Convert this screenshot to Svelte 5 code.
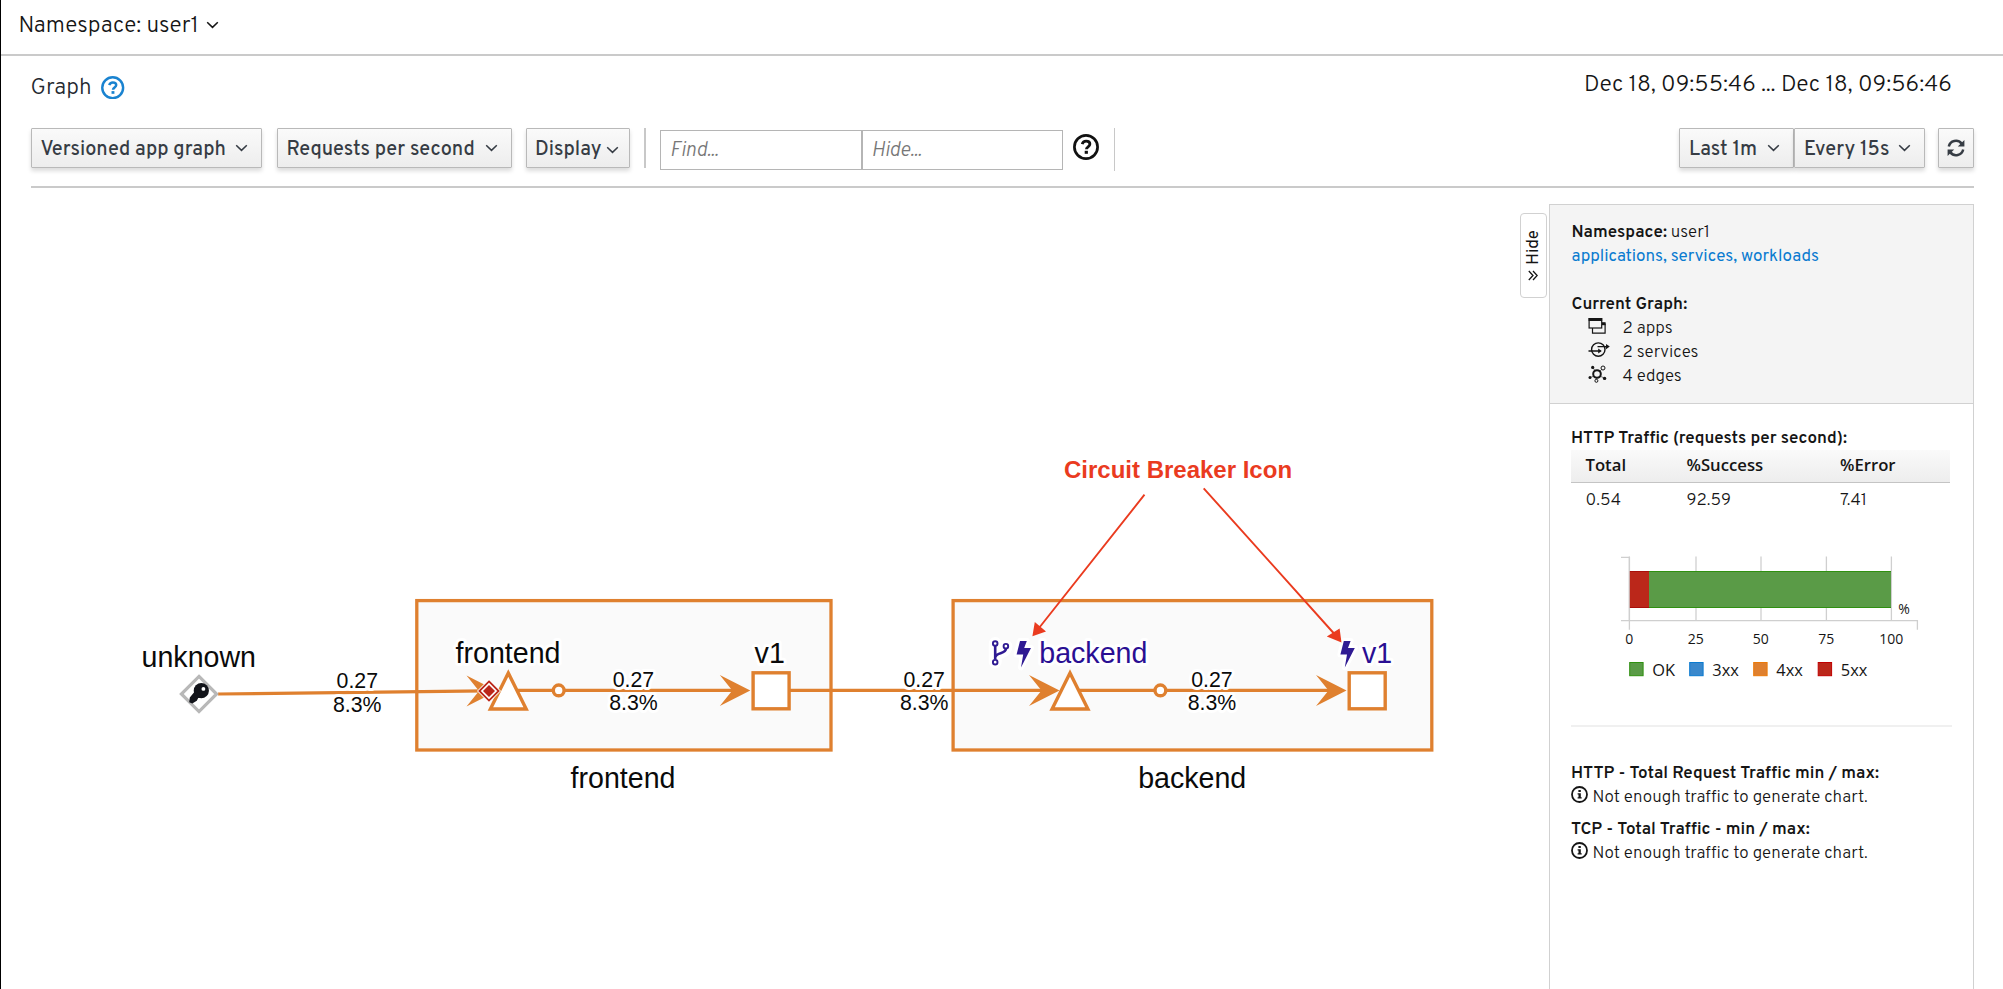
<script>
  const trafficColumns = [
    { label: 'Total', value: '0.54' },
    { label: '%Success', value: '92.59' },
    { label: '%Error', value: '7.41' }
  ];

  const ticks = [
    { x: 58, label: '0' },
    { x: 124.6, label: '25' },
    { x: 189.6, label: '50' },
    { x: 255, label: '75' },
    { x: 320, label: '100' }
  ];

  const legend = [
    { x: 58, label: 'OK', fill: '#5a9b47', edge: '#2f9010' },
    { x: 118, label: '3xx', fill: '#3a88cc', edge: '#0a7bd0' },
    { x: 182, label: '4xx', fill: '#df802f', edge: '#ec7a08' },
    { x: 246.5, label: '5xx', fill: '#bb271a', edge: '#c00000' }
  ];

  const edgeLabels = [
    { x: 357.3, y: 688.3, rate: '0.27', err: '8.3%' },
    { x: 633.4, y: 686.7, rate: '0.27', err: '8.3%' },
    { x: 924.2, y: 686.7, rate: '0.27', err: '8.3%' },
    { x: 1212, y: 686.7, rate: '0.27', err: '8.3%' }
  ];

  const arrows = [
    { x: 497, y: 691 },
    { x: 750.3, y: 690.4 },
    { x: 1059.5, y: 690.4 },
    { x: 1346.5, y: 690.4 }
  ];

  const emptyCharts = ['HTTP - Total Request Traffic min / max:', 'TCP - Total Traffic - min / max:'];
</script>

{#snippet chevron(cls)}
  <svg class="chev {cls}" width="13" height="8" viewBox="0 0 13 8"><path d="M1.2 1.2 6.5 6.4 11.8 1.2" /></svg>
{/snippet}

{#snippet help(size)}
  <svg width={size} height={size} viewBox="0 0 26 26">
    <circle cx="13" cy="13" r="11.6" fill="none" stroke="currentColor" stroke-width="2.7" />
    <path d="M9.2 10.1c.6-2.1 2-3 3.9-3 2.2 0 3.8 1.2 3.8 3 0 2.6-3.5 2.7-3.5 5.1" fill="none" stroke="currentColor" stroke-width="2.8" />
    <rect x="11.7" y="16.8" width="3.2" height="3" fill="currentColor" />
  </svg>
{/snippet}

<div class="page">
  <header class="namespace">
    <span>Namespace: user1</span>
    {@render chevron('wide')}
  </header>

  <main>
    <div class="title">
      <h1>Graph</h1>
      <span class="blue">{@render help(23.4)}</span>
      <time>Dec 18, 09:55:46 ... Dec 18, 09:56:46</time>
    </div>

    <div class="toolbar">
      <button class="type">Versioned app graph {@render chevron('')}</button>
      <button class="rate">Requests per second {@render chevron('')}</button>
      <button class="display">Display {@render chevron('low')}</button>
      <i class="divider"></i>
      <div class="inputs">
        <div class="input">Find...</div>
        <div class="input">Hide...</div>
      </div>
      <span class="find-help">{@render help(26)}</span>
      <i class="divider tall"></i>
      <button class="last">Last 1m {@render chevron('')}</button>
      <button class="every">Every 15s {@render chevron('')}</button>
      <button class="refresh" aria-label="Refresh">
        <svg width="18" height="18" viewBox="0 0 18 18">
          <g fill="none" stroke="currentColor" stroke-width="2.5">
            <path d="M1.8 7.6A7.3 7.3 0 0 1 14.6 4.6" />
            <path d="M16.2 10.4A7.3 7.3 0 0 1 3.4 13.4" />
          </g>
          <path d="M17.4 1v6.6h-6.6z M.6 17v-6.6h6.6z" fill="currentColor" />
        </svg>
      </button>
    </div>

    <div class="content">
      <svg class="graph" width="1519" height="801" viewBox="1 188 1519 801">
        <defs>
          <path id="bolt" d="M3.4 0H10.2L7.6 6.9H14.4L4.4 26.4L6.6 13.5H0Z" />
          <path id="vee" d="M0 0L-30.5 -15.5L-18 0L-30.5 15.5Z" />
        </defs>

        <g class="box">
          <rect x="416.8" y="600.6" width="414.2" height="149.4" />
          <rect x="953.1" y="600.6" width="478.7" height="149.4" />
        </g>

        <g class="edge">
          <path d="M218 694L485 690.8" />
          <path d="M518 690.4H735M790 690.4H1045M1078 690.4H1330" />
        </g>
        {#each arrows as a}
          <use href="#vee" x={a.x} y={a.y} fill="#df802f" />
        {/each}

        <g class="node">
          <path d="M508.3 673L526.2 709H490.4Z" />
          <path d="M1070 673L1087.9 709H1052.1Z" />
          <rect x="753.1" y="672.8" width="36" height="36" />
          <rect x="1349.2" y="672.8" width="36" height="36" />
          <circle cx="558.7" cy="690.4" r="5.4" />
          <circle cx="1160.4" cy="690.4" r="5.4" />
          <path class="gray" d="M199 676.4L216.6 694L199 711.6L181.4 694Z" />
        </g>

        <path d="M489 679L501 691L489 703L477 691Z" fill="#fff" />
        <path d="M489 681.4L498.6 691L489 700.6L479.4 691Z" fill="#fff" stroke="#bb271a" stroke-width="1.8" />
        <path d="M489 685L495 691L489 697L483 691Z" fill="#bb271a" />

        <g fill="#12141a">
          <circle cx="201.3" cy="690.7" r="7.6" />
          <path d="M196 690L189.8 697.6L189.2 702.3L192.3 703.6L196.8 700.8L198.2 698L203 697Z" />
          <circle cx="203.4" cy="688.9" r="1.9" fill="#fff" />
        </g>

        <g class="rates">
          {#each edgeLabels as e}
            <text x={e.x} y={e.y}>{e.rate}</text>
            <text x={e.x} y={e.y + 23.2}>{e.err}</text>
          {/each}
        </g>

        <g class="labels">
          <text x="198.8" y="667">unknown</text>
          <text x="508" y="663">frontend</text>
          <text x="769.7" y="663">v1</text>
          <text x="623" y="787.7">frontend</text>
          <text x="1192.2" y="787.7">backend</text>
          <g class="violet">
            <text x="1093.3" y="663">backend</text>
            <text x="1377" y="663">v1</text>
            <use class="halo" href="#bolt" x="1016.6" y="641" />
            <use class="halo" href="#bolt" x="1340.4" y="641" />
            <g class="branch">
              <path class="rim" d="M995.2 643.6V662M1005.9 646.4C1005.9 654 995.4 650.5 995.4 657" />
              <path d="M995.2 645.8V659.6M1005.9 648.6C1005.9 654.5 996.4 652 995.4 657" />
              <circle cx="995.2" cy="643.5" r="2.3" />
              <circle cx="995.2" cy="662.2" r="2.3" />
              <circle cx="1005.9" cy="646.2" r="2.3" />
            </g>
          </g>
        </g>

        <g class="note">
          <text x="1178" y="477.9">Circuit Breaker Icon</text>
          <path d="M1144.5 494.7L1039 628M1203.7 488.3L1334 633.5" />
          <path class="tip" d="M1032.4 636.3L1034.8 622L1046 631.6Z M1341.5 642.6L1339.6 628.6L1326.8 636.4Z" />
        </g>
      </svg>

      <div class="hide-tab">
        <span>Hide</span>
        <svg width="10" height="11" viewBox="0 0 10 11"><path d="M.8 1L5 5.5L.8 10M5 1L9.2 5.5L5 10" /></svg>
      </div>

      <aside>
        <section class="summary">
          <p><b>Namespace:</b> user1</p>
          <p class="links">applications, services, workloads</p>
          <p class="gap"><b>Current Graph:</b></p>
          <p class="stat">
            <svg width="23" height="18" viewBox="0 0 23 18">
              <path d="M4.5 11v5.2h12.6V7h-3" fill="none" stroke="currentColor" stroke-width="1.2" />
              <rect x="1.1" y="1.6" width="12.6" height="9.4" fill="#f4f4f4" stroke="currentColor" stroke-width="1.2" />
              <path d="M.6 1h13.6v3H.6z" fill="currentColor" />
              <path d="M14 5.2h3.6v3H14z" fill="currentColor" />
            </svg>
            2 apps
          </p>
          <p class="stat">
            <svg width="23" height="18" viewBox="0 0 23 18">
              <g fill="none" stroke="currentColor" stroke-width="1.4">
                <circle cx="10.3" cy="8.6" r="6.7" />
                <path d="M.5 10h12M9.5 5.6h10.5" />
              </g>
              <path d="M10.2 7.4l3.6 2.6-3.6 2.6z M18 3l3.8 2.6-3.8 2.6z" fill="currentColor" />
            </svg>
            2 services
          </p>
          <p class="stat">
            <svg width="23" height="18" viewBox="0 0 23 18">
              <g fill="none" stroke="currentColor">
                <circle cx="9" cy="9" r="3.8" stroke-width="2" />
                <circle cx="15" cy="3" r="2" />
                <circle cx="8.4" cy="15.8" r="1.5" />
                <path d="M5 2.6l2 3.2M12 6l2-1.8M5.6 11.2L2.5 12.4M12 11l4.4 2.2M8.7 13v1.5" stroke-width=".6" />
              </g>
              <g fill="currentColor">
                <circle cx="4.7" cy="2.4" r="1.6" />
                <circle cx="2" cy="12.4" r="1.5" />
                <circle cx="16.6" cy="13.4" r="1.7" />
              </g>
            </svg>
            4 edges
          </p>
        </section>

        <section class="traffic">
          <h2>HTTP Traffic (requests per second):</h2>
          <div class="row head">
            {#each trafficColumns as c}<span>{c.label}</span>{/each}
          </div>
          <div class="row">
            {#each trafficColumns as c}<span>{c.value}</span>{/each}
          </div>

          <svg class="chart" width="379" height="140" viewBox="0 0 379 140">
            <g class="axis">
              {#each ticks as t}
                <path d="M{t.x + 0.4} 5.5V70" />
              {/each}
              <path d="M50 6.3H58.4V78.7M50 69.7H346.4V78.7" />
            </g>
            <rect x="58.8" y="20" width="19.2" height="37" fill="#bb271a" />
            <rect x="78" y="20" width="242" height="37" fill="#5a9b47" />
            <path d="M59 20.5H78M59 56.5H78" stroke="#a80f0a" />
            <path d="M78 20.5H320M78 56.5H320" stroke="#2f9010" />
            <text class="tick" x="333" y="62.6">%</text>
            {#each ticks as t}
              <text class="tick" x={t.x + 0.2} y="93">{t.label}</text>
            {/each}
            {#each legend as l}
              <rect x={l.x + 0.7} y="111.5" width="13.4" height="13.2" fill={l.fill} stroke={l.edge} />
              <text x={l.x + 23.3} y="125">{l.label}</text>
            {/each}
          </svg>
        </section>

        <section class="empty">
          {#each emptyCharts as title}
            <h2>{title}</h2>
            <p>
              <svg width="17" height="17" viewBox="0 0 17 17">
                <circle cx="8.5" cy="8.5" r="7.5" fill="none" stroke="currentColor" stroke-width="1.8" />
                <path d="M7.4 4h2.4v2H7.4zM6.6 7.2h3.2v4h.9v1.4H6.6v-1.4h.9V8.6h-.9z" fill="currentColor" />
              </svg>
              Not enough traffic to generate chart.
            </p>
          {/each}
        </section>
      </aside>
    </div>
  </main>
</div>

<style>
  :global(body) {
    background: #fff;
    overflow: hidden;
  }
  .page {
    box-sizing: border-box;
    width: 2003px;
    height: 989px;
    overflow: hidden;
    border-left: 1px solid #000;
    display: flex;
    flex-direction: column;
    font-family: 'Overpass', 'Roboto', sans-serif;
    color: #151515;
  }
  .page * {
    box-sizing: border-box;
  }
  svg {
    display: block;
    flex: none;
  }
  h1, h2, p {
    margin: 0;
  }
  .chev path {
    fill: none;
    stroke: currentColor;
    stroke-width: 1.5;
  }

  .namespace {
    height: 56px;
    flex: none;
    border-bottom: 2px solid #cacaca;
    padding: 12px 0 0 17.5px;
    display: flex;
    gap: 7px;
    font-size: 22.7px;
    line-height: 30px;
    font-weight: 300;
  }
  .namespace .chev {
    margin-top: 9px;
  }

  main {
    flex: 1;
    min-height: 0;
    display: flex;
    flex-direction: column;
  }
  .title {
    height: 72px;
    flex: none;
    padding: 17px 51px 0 29.5px;
    display: flex;
    align-items: flex-start;
  }
  h1 {
    margin-top: 1px;
    font-size: 22.6px;
    font-weight: 300;
    line-height: 30px;
    color: #24292f;
  }
  .blue {
    color: #1a83d0;
    margin: 3px 0 0 9.5px;
  }
  time {
    margin: -2px 0 0 auto;
    font-size: 23.1px;
    font-weight: 300;
    line-height: 30px;
  }

  .toolbar {
    margin: 0 29px 0 29.5px;
    height: 60px;
    flex: none;
    border-bottom: 2px solid #cacaca;
    display: flex;
    align-items: flex-start;
  }
  button {
    height: 40px;
    flex: none;
    border: 1.5px solid #b9b9b9;
    border-radius: 1px;
    background: linear-gradient(#fafafa, #ededed);
    box-shadow: 0 3px 4px rgba(3, 3, 3, 0.14);
    padding: 2px 10px 0 9px;
    display: flex;
    justify-content: space-between;
    font: 500 19.9px/38px 'Overpass', 'Roboto', sans-serif;
    color: #363c44;
    white-space: nowrap;
  }
  button .chev {
    margin-top: 13px;
  }
  button .low {
    margin-top: 15px;
  }
  .type {
    width: 231.5px;
    padding-right: 13px;
  }
  .rate {
    width: 235px;
    margin-left: 14.5px;
    padding-right: 13px;
  }
  .display {
    width: 103.5px;
    margin-left: 14.5px;
    padding: 2px 10px 0 8px;
  }
  .divider {
    width: 1.5px;
    height: 40px;
    margin-left: 14.5px;
    flex: none;
    background: #c8c8c8;
  }
  .tall {
    height: 43px;
  }
  .inputs {
    display: flex;
    margin: 2px 0 0 14.5px;
  }
  .input {
    width: 201.5px;
    height: 40px;
    border: 1.6px solid #b5b5b5;
    padding: 1px 0 0 9px;
    font-size: 20px;
    font-style: italic;
    font-weight: 300;
    line-height: 38px;
    letter-spacing: -0.1px;
    color: #777;
  }
  .find-help {
    margin: 6px 0 0 10px;
    color: #111;
  }
  .last {
    width: 115px;
    margin-left: auto;
    padding-right: 13px;
  }
  .every {
    width: 131px;
    padding-right: 13px;
  }
  .refresh {
    width: 36px;
    margin-left: 13px;
    padding: 10px 0 0;
    justify-content: center;
  }

  .content {
    flex: 1;
    min-height: 0;
    display: flex;
    align-items: flex-start;
  }
  .graph {
    font-family: 'Liberation Sans', Arial, sans-serif;
  }
  .box rect {
    fill: #fafafa;
    stroke: #df802f;
    stroke-width: 3.3;
  }
  .edge path {
    fill: none;
    stroke: #df802f;
    stroke-width: 3.2;
  }
  .node > * {
    fill: #fff;
    stroke: #df802f;
    stroke-width: 3.4;
  }
  .node .gray {
    stroke: #b8b8b8;
    stroke-width: 3.2;
  }
  .graph text {
    text-anchor: middle;
    paint-order: stroke;
    stroke: #fff;
    stroke-width: 6px;
    stroke-linejoin: round;
  }
  .rates text {
    font-size: 21.3px;
    fill: #0a0a0a;
  }
  .labels text {
    font-size: 28.6px;
    fill: #0a0a0a;
  }
  .labels .violet text {
    fill: #2a0f93;
  }
  .halo {
    fill: #2f1a93;
    stroke: #fff;
    stroke-width: 6px;
    stroke-linejoin: round;
    paint-order: stroke;
  }
  .branch * {
    fill: none;
    stroke: #2f1a93;
    stroke-width: 1.9;
  }
  .branch path {
    stroke-width: 2.6;
  }
  .branch .rim {
    stroke: #fff;
    stroke-width: 13;
    stroke-linecap: round;
  }
  .branch circle {
    fill: #fff;
  }
  .graph .note text {
    font-size: 24px;
    font-weight: 700;
    fill: #ea3b1f;
    stroke: none;
  }
  .note path {
    stroke: #ea3b1f;
    stroke-width: 1.9;
  }
  .note .tip {
    fill: #ea3b1f;
    stroke: none;
  }

  .hide-tab {
    width: 26.5px;
    height: 84.5px;
    margin: 25px 2px 0 0;
    flex: none;
    border: 1.4px solid #d1d1d1;
    border-radius: 4px;
    display: flex;
    flex-direction: column;
    align-items: center;
    padding-top: 16px;
    gap: 5px;
  }
  .hide-tab span {
    writing-mode: vertical-rl;
    transform: rotate(180deg);
    font-size: 17px;
    line-height: 24px;
    height: 35px;
    margin-left: 2px;
  }
  .hide-tab path {
    fill: none;
    stroke: #151515;
    stroke-width: 1.3;
  }

  aside {
    width: 425px;
    height: 800px;
    margin-top: 16px;
    flex: none;
    border: 1.5px solid #d1d1d1;
    font-size: 17px;
    line-height: 24px;
    font-weight: 300;
  }
  b, h2 {
    font-weight: 600;
  }
  .summary {
    height: 198.5px;
    background: #f4f4f4;
    border-bottom: 1.5px solid #d1d1d1;
    padding: 16px 22px 0;
  }
  .links {
    color: #0a7bd0;
    font-weight: 400;
  }
  .gap {
    margin-top: 24px;
  }
  .stat {
    display: flex;
    gap: 12px;
    padding-left: 16px;
  }
  h2 {
    font-size: 17px;
    line-height: 24px;
  }
  .traffic {
    margin: 0 21.5px;
    padding-top: 23.5px;
    height: 323px;
    width: 381px;
    border-bottom: 2px solid #f0f0f0;
  }
  .traffic h2 {
    height: 23px;
  }
  .row {
    width: 379px;
    height: 36.5px;
    padding: 5.5px 0 0 14.5px;
    display: grid;
    grid-template-columns: 101px 153.5px 1fr;
  }
  .head {
    height: 33px;
    padding-top: 2.5px;
    border-bottom: 1.5px solid #c4c4c4;
    background: linear-gradient(#fafafa, #ededed);
    font: 600 16.7px/24px 'Open Sans', sans-serif;
  }
  .chart {
    margin-top: 31px;
    font-family: 'Open Sans', sans-serif;
    font-weight: 400;
  }
  .axis path {
    fill: none;
    stroke: #cfcfcf;
    stroke-width: 1.3;
  }
  .chart text {
    font-size: 16.4px;
    fill: #151515;
  }
  .chart .tick {
    font-size: 14px;
    text-anchor: middle;
  }
  .empty {
    padding: 35px 22px 0 21.5px;
  }
  .empty p {
    display: flex;
    gap: 4.5px;
    margin-bottom: 8px;
  }
</style>
